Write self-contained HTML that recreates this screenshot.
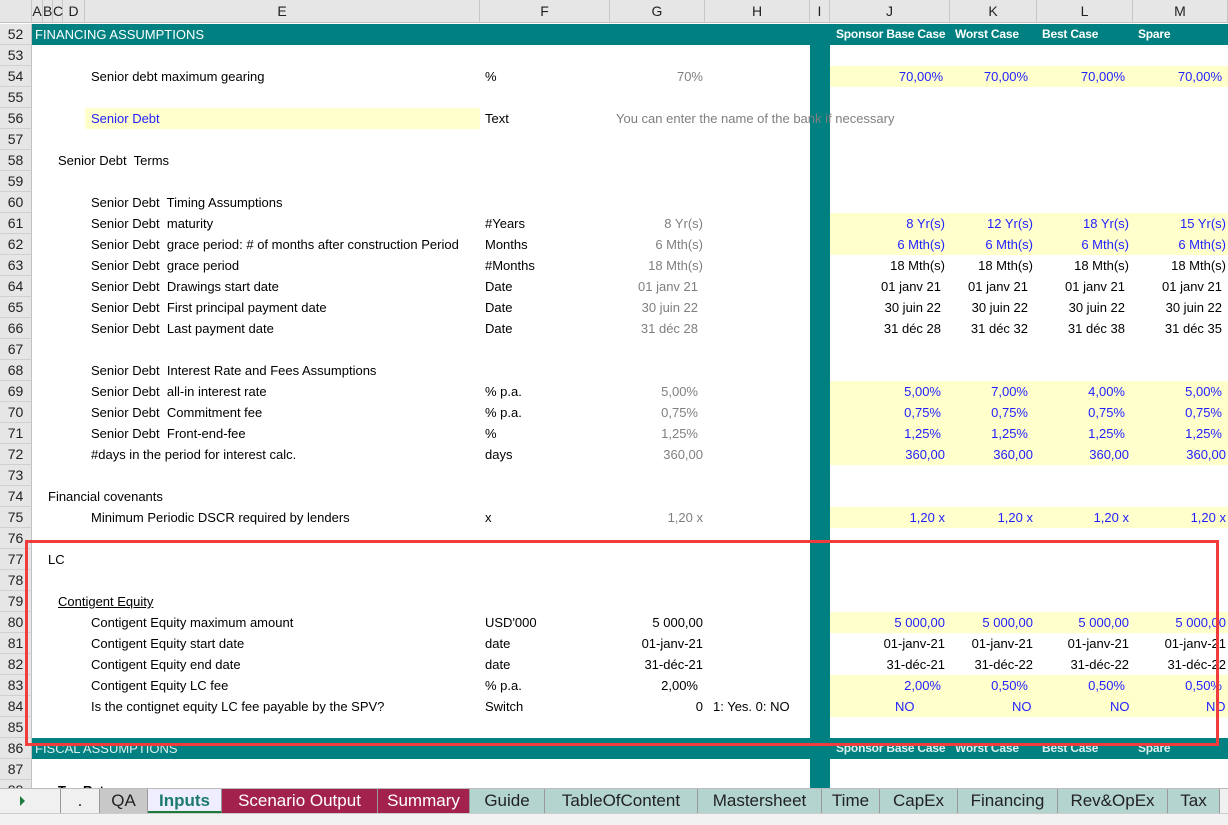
<!DOCTYPE html>
<html><head><meta charset="utf-8"><style>
*{margin:0;padding:0;box-sizing:border-box}
body{width:1228px;height:825px;overflow:hidden;background:#fff;font-family:"Liberation Sans",Arial,sans-serif;font-size:13px;position:relative}
.a{position:absolute;white-space:nowrap}
.hdr{position:absolute;top:0;height:23px;background:#e6e6e6;border-right:1px solid #c8c8c8;border-bottom:1px solid #c0c0c0;text-align:center;line-height:23px;font-size:14px;color:#222}
.rn{position:absolute;left:0;width:32px;height:21px;background:#e6e6e6;border-bottom:1px solid #d0d0d0;border-right:1px solid #c0c0c0;text-align:center;line-height:21px;font-size:14px;color:#222}
.t{position:absolute;height:21px;line-height:21px;white-space:nowrap}
.y{position:absolute;background:#ffffcc;height:21px}
.g{color:#7f7f7f}.b{color:#1f1fff}
.r{text-align:right}
.hb{font-weight:bold;font-size:12px;letter-spacing:-0.2px}
.tab{position:absolute;top:789px;height:24px;line-height:24px;text-align:center;font-size:17px;color:#222;border-right:1px solid #999}
</style></head><body>
<div class="hdr" style="left:0;width:32px"></div>
<div class="hdr" style="left:32px;width:11px">A</div>
<div class="hdr" style="left:43px;width:10px">B</div>
<div class="hdr" style="left:53px;width:10px">C</div>
<div class="hdr" style="left:63px;width:22px">D</div>
<div class="hdr" style="left:85px;width:395px">E</div>
<div class="hdr" style="left:480px;width:130px">F</div>
<div class="hdr" style="left:610px;width:95px">G</div>
<div class="hdr" style="left:705px;width:105px">H</div>
<div class="hdr" style="left:810px;width:20px">I</div>
<div class="hdr" style="left:830px;width:120px">J</div>
<div class="hdr" style="left:950px;width:87px">K</div>
<div class="hdr" style="left:1037px;width:96px">L</div>
<div class="hdr" style="left:1133px;width:95px">M</div>
<div class="rn" style="top:24px">52</div><div class="rn" style="top:45px">53</div><div class="rn" style="top:66px">54</div><div class="rn" style="top:87px">55</div><div class="rn" style="top:108px">56</div><div class="rn" style="top:129px">57</div><div class="rn" style="top:150px">58</div><div class="rn" style="top:171px">59</div><div class="rn" style="top:192px">60</div><div class="rn" style="top:213px">61</div><div class="rn" style="top:234px">62</div><div class="rn" style="top:255px">63</div><div class="rn" style="top:276px">64</div><div class="rn" style="top:297px">65</div><div class="rn" style="top:318px">66</div><div class="rn" style="top:339px">67</div><div class="rn" style="top:360px">68</div><div class="rn" style="top:381px">69</div><div class="rn" style="top:402px">70</div><div class="rn" style="top:423px">71</div><div class="rn" style="top:444px">72</div><div class="rn" style="top:465px">73</div><div class="rn" style="top:486px">74</div><div class="rn" style="top:507px">75</div><div class="rn" style="top:528px">76</div><div class="rn" style="top:549px">77</div><div class="rn" style="top:570px">78</div><div class="rn" style="top:591px">79</div><div class="rn" style="top:612px">80</div><div class="rn" style="top:633px">81</div><div class="rn" style="top:654px">82</div><div class="rn" style="top:675px">83</div><div class="rn" style="top:696px">84</div><div class="rn" style="top:717px">85</div><div class="rn" style="top:738px">86</div><div class="rn" style="top:759px">87</div><div class="rn" style="top:780px">88</div>
<div class="a" style="left:32px;top:24px;width:1196px;height:21px;background:#008080"></div>
<div class="a" style="left:32px;top:738px;width:1196px;height:21px;background:#008080"></div>
<div class="a" style="left:810px;top:24px;width:20px;height:766px;background:#008080"></div>
<div class="t" style="left:35px;top:24px;color:#fff">FINANCING ASSUMPTIONS</div>
<div class="t" style="left:35px;top:738px;color:#d8eeee">FISCAL ASSUMPTIONS</div>
<div class="t hb" style="left:836px;top:24px;color:#fff">Sponsor Base Case</div>
<div class="t hb" style="left:955px;top:24px;color:#fff">Worst Case</div>
<div class="t hb" style="left:1042px;top:24px;color:#fff">Best Case</div>
<div class="t hb" style="left:1138px;top:24px;color:#fff">Spare</div>
<div class="t hb" style="left:836px;top:738px;color:#d8eeee">Sponsor Base Case</div>
<div class="t hb" style="left:955px;top:738px;color:#d8eeee">Worst Case</div>
<div class="t hb" style="left:1042px;top:738px;color:#d8eeee">Best Case</div>
<div class="t hb" style="left:1138px;top:738px;color:#d8eeee">Spare</div>
<div class="y" style="left:85px;top:108px;width:395px"></div>
<div class="y" style="left:830px;top:66px;width:398px"></div>
<div class="y" style="left:830px;top:213px;width:398px;height:42px"></div>
<div class="y" style="left:830px;top:381px;width:398px;height:84px"></div>
<div class="y" style="left:830px;top:507px;width:398px"></div>
<div class="y" style="left:830px;top:612px;width:398px"></div>
<div class="y" style="left:830px;top:675px;width:398px;height:42px"></div>
<div class="t" style="left:91px;top:66px">Senior debt maximum gearing</div><div class="t" style="left:485px;top:66px">%</div><div class="t g r" style="left:600px;width:103px;top:66px">70%</div>
<div class="t b" style="left:91px;top:108px">Senior Debt</div><div class="t" style="left:485px;top:108px">Text</div><div class="t g" style="left:616px;top:108px">You can enter the name of the bank if necessary</div>
<div class="t" style="left:58px;top:150px">Senior Debt&nbsp; Terms</div>
<div class="t" style="left:91px;top:192px">Senior Debt&nbsp; Timing Assumptions</div>
<div class="t" style="left:91px;top:213px">Senior Debt&nbsp; maturity</div><div class="t" style="left:485px;top:213px">#Years</div><div class="t g r" style="left:600px;width:103px;top:213px">8 Yr(s)</div>
<div class="t" style="left:91px;top:234px;width:389px;overflow:hidden">Senior Debt&nbsp; grace period: # of months after construction Period</div><div class="t" style="left:485px;top:234px">Months</div><div class="t g r" style="left:600px;width:103px;top:234px">6 Mth(s)</div>
<div class="t" style="left:91px;top:255px">Senior Debt&nbsp; grace period</div><div class="t" style="left:485px;top:255px">#Months</div><div class="t g r" style="left:600px;width:103px;top:255px">18 Mth(s)</div>
<div class="t" style="left:91px;top:276px">Senior Debt&nbsp; Drawings start date</div><div class="t" style="left:485px;top:276px">Date</div><div class="t g r" style="left:600px;width:98px;top:276px">01 janv 21</div>
<div class="t" style="left:91px;top:297px">Senior Debt&nbsp; First principal payment date</div><div class="t" style="left:485px;top:297px">Date</div><div class="t g r" style="left:600px;width:98px;top:297px">30 juin 22</div>
<div class="t" style="left:91px;top:318px">Senior Debt&nbsp; Last payment date</div><div class="t" style="left:485px;top:318px">Date</div><div class="t g r" style="left:600px;width:98px;top:318px">31 déc 28</div>
<div class="t" style="left:91px;top:360px">Senior Debt&nbsp; Interest Rate and Fees Assumptions</div>
<div class="t" style="left:91px;top:381px">Senior Debt&nbsp; all-in interest rate</div><div class="t" style="left:485px;top:381px">% p.a.</div><div class="t g r" style="left:600px;width:98px;top:381px">5,00%</div>
<div class="t" style="left:91px;top:402px">Senior Debt&nbsp; Commitment fee</div><div class="t" style="left:485px;top:402px">% p.a.</div><div class="t g r" style="left:600px;width:98px;top:402px">0,75%</div>
<div class="t" style="left:91px;top:423px">Senior Debt&nbsp; Front-end-fee</div><div class="t" style="left:485px;top:423px">%</div><div class="t g r" style="left:600px;width:98px;top:423px">1,25%</div>
<div class="t" style="left:91px;top:444px">#days in the period for interest calc.</div><div class="t" style="left:485px;top:444px">days</div><div class="t g r" style="left:600px;width:103px;top:444px">360,00</div>
<div class="t" style="left:48px;top:486px">Financial covenants</div>
<div class="t" style="left:91px;top:507px">Minimum Periodic DSCR required by lenders</div><div class="t" style="left:485px;top:507px">x</div><div class="t g r" style="left:600px;width:103px;top:507px">1,20 x</div>
<div class="t" style="left:48px;top:549px">LC</div>
<div class="t" style="left:58px;top:591px;text-decoration:underline">Contigent Equity</div>
<div class="t" style="left:91px;top:612px">Contigent Equity maximum amount</div><div class="t" style="left:485px;top:612px">USD'000</div><div class="t r" style="left:600px;width:103px;top:612px">5 000,00</div>
<div class="t" style="left:91px;top:633px">Contigent Equity start date</div><div class="t" style="left:485px;top:633px">date</div><div class="t r" style="left:600px;width:103px;top:633px">01-janv-21</div>
<div class="t" style="left:91px;top:654px">Contigent Equity end date</div><div class="t" style="left:485px;top:654px">date</div><div class="t r" style="left:600px;width:103px;top:654px">31-déc-21</div>
<div class="t" style="left:91px;top:675px">Contigent Equity LC fee</div><div class="t" style="left:485px;top:675px">% p.a.</div><div class="t r" style="left:600px;width:98px;top:675px">2,00%</div>
<div class="t" style="left:91px;top:696px">Is the contignet equity LC fee payable by the SPV?</div><div class="t" style="left:485px;top:696px">Switch</div><div class="t r" style="left:600px;width:103px;top:696px">0</div><div class="t" style="left:713px;top:696px">1: Yes. 0: NO</div>
<div class="t" style="left:58px;top:780px;font-weight:bold">Tax Rates</div>
<div class="t b r" style="left:830px;width:113px;top:66px">70,00%</div><div class="t b r" style="left:950px;width:78px;top:66px">70,00%</div><div class="t b r" style="left:1037px;width:88px;top:66px">70,00%</div><div class="t b r" style="left:1133px;width:89px;top:66px">70,00%</div>
<div class="t b r" style="left:830px;width:115px;top:213px">8 Yr(s)</div><div class="t b r" style="left:950px;width:83px;top:213px">12 Yr(s)</div><div class="t b r" style="left:1037px;width:92px;top:213px">18 Yr(s)</div><div class="t b r" style="left:1133px;width:93px;top:213px">15 Yr(s)</div>
<div class="t b r" style="left:830px;width:115px;top:234px">6 Mth(s)</div><div class="t b r" style="left:950px;width:83px;top:234px">6 Mth(s)</div><div class="t b r" style="left:1037px;width:92px;top:234px">6 Mth(s)</div><div class="t b r" style="left:1133px;width:93px;top:234px">6 Mth(s)</div>
<div class="t r" style="left:830px;width:115px;top:255px">18 Mth(s)</div><div class="t r" style="left:950px;width:83px;top:255px">18 Mth(s)</div><div class="t r" style="left:1037px;width:92px;top:255px">18 Mth(s)</div><div class="t r" style="left:1133px;width:93px;top:255px">18 Mth(s)</div>
<div class="t r" style="left:830px;width:111px;top:276px">01 janv 21</div><div class="t r" style="left:950px;width:78px;top:276px">01 janv 21</div><div class="t r" style="left:1037px;width:88px;top:276px">01 janv 21</div><div class="t r" style="left:1133px;width:89px;top:276px">01 janv 21</div>
<div class="t r" style="left:830px;width:111px;top:297px">30 juin 22</div><div class="t r" style="left:950px;width:78px;top:297px">30 juin 22</div><div class="t r" style="left:1037px;width:88px;top:297px">30 juin 22</div><div class="t r" style="left:1133px;width:89px;top:297px">30 juin 22</div>
<div class="t r" style="left:830px;width:111px;top:318px">31 déc 28</div><div class="t r" style="left:950px;width:78px;top:318px">31 déc 32</div><div class="t r" style="left:1037px;width:88px;top:318px">31 déc 38</div><div class="t r" style="left:1133px;width:89px;top:318px">31 déc 35</div>
<div class="t b r" style="left:830px;width:111px;top:381px">5,00%</div><div class="t b r" style="left:950px;width:78px;top:381px">7,00%</div><div class="t b r" style="left:1037px;width:88px;top:381px">4,00%</div><div class="t b r" style="left:1133px;width:89px;top:381px">5,00%</div>
<div class="t b r" style="left:830px;width:111px;top:402px">0,75%</div><div class="t b r" style="left:950px;width:78px;top:402px">0,75%</div><div class="t b r" style="left:1037px;width:88px;top:402px">0,75%</div><div class="t b r" style="left:1133px;width:89px;top:402px">0,75%</div>
<div class="t b r" style="left:830px;width:111px;top:423px">1,25%</div><div class="t b r" style="left:950px;width:78px;top:423px">1,25%</div><div class="t b r" style="left:1037px;width:88px;top:423px">1,25%</div><div class="t b r" style="left:1133px;width:89px;top:423px">1,25%</div>
<div class="t b r" style="left:830px;width:115px;top:444px">360,00</div><div class="t b r" style="left:950px;width:83px;top:444px">360,00</div><div class="t b r" style="left:1037px;width:92px;top:444px">360,00</div><div class="t b r" style="left:1133px;width:93px;top:444px">360,00</div>
<div class="t b r" style="left:830px;width:115px;top:507px">1,20 x</div><div class="t b r" style="left:950px;width:83px;top:507px">1,20 x</div><div class="t b r" style="left:1037px;width:92px;top:507px">1,20 x</div><div class="t b r" style="left:1133px;width:93px;top:507px">1,20 x</div>
<div class="t b r" style="left:830px;width:115px;top:612px">5 000,00</div><div class="t b r" style="left:950px;width:83px;top:612px">5 000,00</div><div class="t b r" style="left:1037px;width:92px;top:612px">5 000,00</div><div class="t b r" style="left:1133px;width:93px;top:612px">5 000,00</div>
<div class="t r" style="left:830px;width:115px;top:633px">01-janv-21</div><div class="t r" style="left:950px;width:83px;top:633px">01-janv-21</div><div class="t r" style="left:1037px;width:92px;top:633px">01-janv-21</div><div class="t r" style="left:1133px;width:93px;top:633px">01-janv-21</div>
<div class="t r" style="left:830px;width:115px;top:654px">31-déc-21</div><div class="t r" style="left:950px;width:83px;top:654px">31-déc-22</div><div class="t r" style="left:1037px;width:92px;top:654px">31-déc-22</div><div class="t r" style="left:1133px;width:93px;top:654px">31-déc-22</div>
<div class="t b r" style="left:830px;width:111px;top:675px">2,00%</div><div class="t b r" style="left:950px;width:78px;top:675px">0,50%</div><div class="t b r" style="left:1037px;width:88px;top:675px">0,50%</div><div class="t b r" style="left:1133px;width:89px;top:675px">0,50%</div>
<div class="t b" style="left:895px;top:696px">NO</div><div class="t b" style="left:1012px;top:696px">NO</div><div class="t b" style="left:1110px;top:696px">NO</div><div class="t b" style="left:1206px;top:696px">NO</div>
<div class="a" style="left:25px;top:540px;width:1194px;height:206px;border:3px solid #f03c3c"></div>
<div class="a" style="left:0;top:788px;width:1228px;height:26px;background:#f0f0f0;border-top:1px solid #bbb"></div>
<div class="a" style="left:0;top:813px;width:1228px;height:12px;background:#f2f2f2;border-top:1px solid #ccc"></div>
<div class="a" style="left:20px;top:796px;width:0;height:0;border-left:5px solid #1e7a3c;border-top:5px solid transparent;border-bottom:5px solid transparent"></div>
<div class="tab" style="left:60px;width:40px;background:#f0f0f0;border-left:1px solid #999">.</div>
<div class="tab" style="left:100px;width:48px;background:#c8c8c8">QA</div>
<div class="tab" style="left:148px;width:74px;background:#eeeeff;color:#1e7a6e;font-weight:bold;border-bottom:2px solid #1e7a3c">Inputs</div>
<div class="tab" style="left:222px;width:156px;background:#a3224d;color:#fff">Scenario Output</div>
<div class="tab" style="left:378px;width:92px;background:#a3224d;color:#fff">Summary</div>
<div class="tab" style="left:470px;width:75px;background:#b3d4cf">Guide</div>
<div class="tab" style="left:545px;width:153px;background:#b3d4cf">TableOfContent</div>
<div class="tab" style="left:698px;width:124px;background:#b3d4cf">Mastersheet</div>
<div class="tab" style="left:822px;width:58px;background:#b3d4cf">Time</div>
<div class="tab" style="left:880px;width:78px;background:#b3d4cf">CapEx</div>
<div class="tab" style="left:958px;width:100px;background:#b3d4cf">Financing</div>
<div class="tab" style="left:1058px;width:110px;background:#b3d4cf">Rev&amp;OpEx</div>
<div class="tab" style="left:1168px;width:52px;background:#b3d4cf">Tax</div>
</body></html>
